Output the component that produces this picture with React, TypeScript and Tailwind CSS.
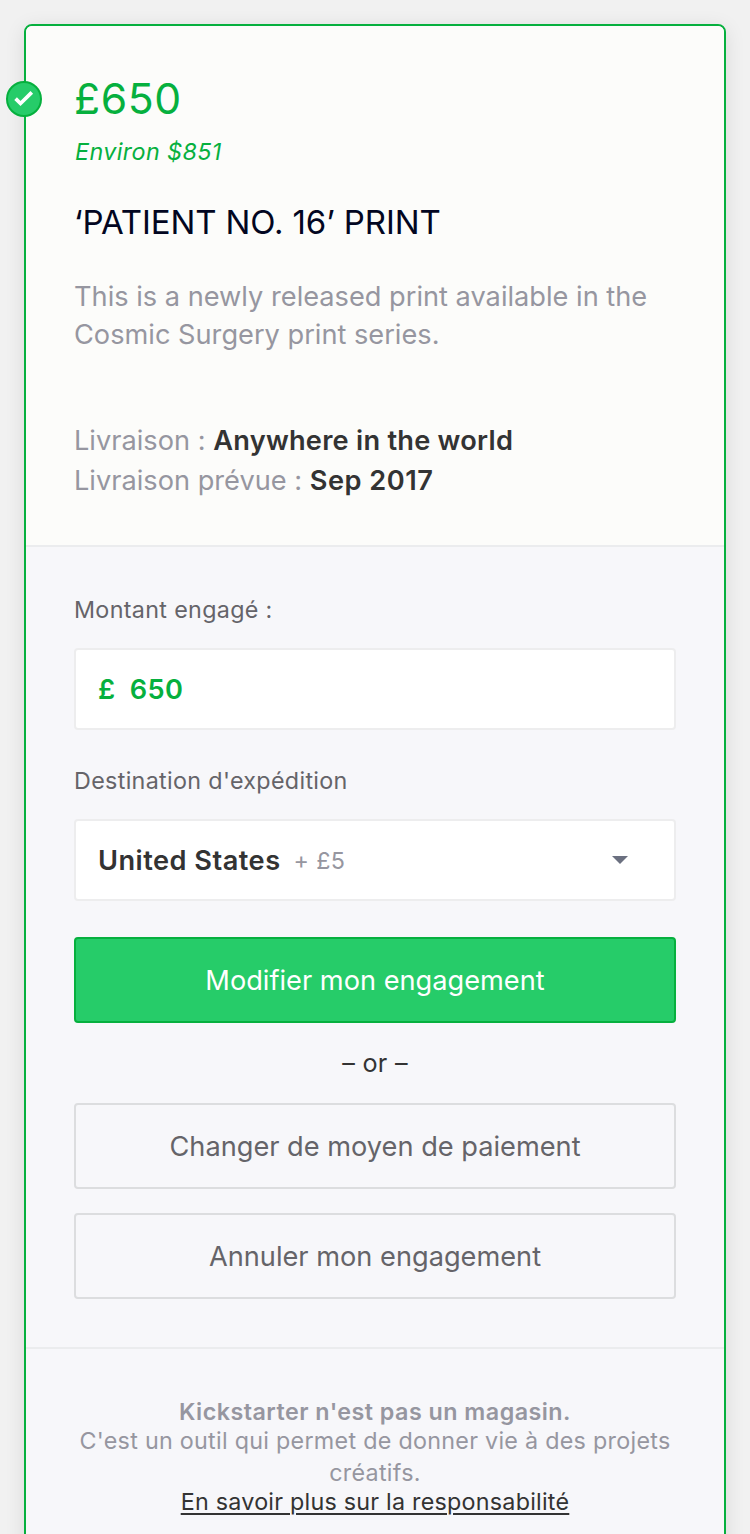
import React from "react";

const secondaryButton =
  "mt-6 flex h-[86px] w-full items-center justify-center rounded-[4px] border-2 border-[#dcdddf] pt-px text-[27.2px] leading-[33px] text-[#656469]";

const fieldLabel = "block text-[23.3px] leading-[29px] tracking-[0.33px] text-[#656469]";

function PledgeSummary() {
  return (
    <section className="h-[521px] border-b-2 border-[#ebecee] bg-[#fcfcfa] px-12 pt-[46px]">
      <h1 className="h-[54px] text-[42.7px] leading-[53px] tracking-[0.6px] text-[#06b03e]">£650</h1>
      <p className="mt-[11px] pl-px text-[23.3px] italic leading-[29px] tracking-[0.4px] text-[#06b03e]">Environ $851</p>
      <h2 className="mt-9 text-[33px] leading-10 tracking-[-0.12px] text-[#020621]">‘PATIENT NO. 16’ PRINT</h2>
      <p className="mt-[35.5px] whitespace-nowrap text-[27.2px] leading-[38px] text-[#9696a0]">
        This is a newly released print available in the
        <br />
        Cosmic Surgery print series.
      </p>
      <div className="mt-[67px] text-[27.2px] leading-10 text-[#9696a0]">
        <p>Livraison : <span className="font-semibold tracking-[0.25px] text-[#333]">Anywhere in the world</span></p>
        <p>Livraison prévue : <span className="font-semibold tracking-[0.5px] text-[#333]">Sep 2017</span></p>
      </div>
    </section>
  );
}

function PledgeForm() {
  return (
    <section className="h-[802px] border-b-2 border-[#ebecee] px-12 pt-12">
      <label className={fieldLabel}>Montant engagé :</label>
      <div className="mt-6 flex h-[82px] items-center gap-[14px] rounded-[4px] border-2 border-[#ededee] bg-white px-[22px] pt-px text-[27.2px] font-semibold leading-[33px] tracking-[0.5px] text-[#06b03e]">
        <span>£</span><span>650</span>
      </div>
      <div className="mt-9"><label className={fieldLabel}>Destination d'expédition</label></div>
      <div className="mt-6 flex h-[82px] items-center rounded-[4px] border-2 border-[#ededee] bg-white pl-[22px] pr-[46px]">
        <span className="pt-px text-[27.2px] font-semibold leading-[33px] tracking-[0.48px] text-[#333]">United States</span>
        <span className="ml-[13px] pt-px text-[23.3px] leading-[29px] tracking-[0.35px] text-[#9696a0]">+ £5</span>
        <svg className="ml-auto" width="16" height="8" viewBox="0 0 16 8"><path d="M0 0h16L8 8z" fill="#6b7080" /></svg>
      </div>
      <button className="mt-9 flex h-[86px] w-full items-center justify-center rounded-[4px] border-2 border-[#06b03e] bg-[#26cc69] pt-px text-[27.2px] leading-[33px] text-white">Modifier mon engagement</button>
      <p className="mt-[25px] h-[31px] text-center text-[25.2px] leading-[30px] tracking-[0.3px] text-[#333]">– or –</p>
      <button className={secondaryButton}>Changer de moyen de paiement</button>
      <button className={secondaryButton}>Annuler mon engagement</button>
    </section>
  );
}

export default function App() {
  return (
    <main className="h-[1534px] overflow-hidden bg-[#f1f1f1] px-6 pt-6 font-['Inter','Liberation_Sans',sans-serif]">
      <article className="relative h-[1600px] rounded-[8px] border-2 border-[#06b03e] bg-[#f7f7fa] shadow-[0_4px_20px_rgba(0,0,0,0.10)]">
        <div className="overflow-hidden rounded-t-[6px]"><PledgeSummary /></div>
        <div className="absolute -left-5 top-[55px] flex size-9 items-center justify-center rounded-full border-2 border-[#06b03e] bg-[#26cc69]">
          <svg width="20" height="16" viewBox="0 0 20 16" fill="none"><path d="M1.6 7.6l4.9 4.9L17.8 1.4" stroke="white" strokeWidth="3.7" /></svg>
        </div>
        <PledgeForm />
        <footer className="whitespace-nowrap px-12 pt-12 text-center text-[23.3px] text-[#9696a0]">
          <p className="font-semibold leading-[29px] tracking-[0.47px]">Kickstarter n'est pas un magasin.</p>
          <p className="-mt-[1.5px] leading-[32px] tracking-[0.28px]">C'est un outil qui permet de donner vie à des projets<br />créatifs.</p>
          <p className="-mt-[1.5px] leading-[29px] tracking-[0.24px]"><a className="text-[#333] underline decoration-2 underline-offset-[3px]">En savoir plus sur la responsabilité</a></p>
        </footer>
      </article>
    </main>
  );
}
